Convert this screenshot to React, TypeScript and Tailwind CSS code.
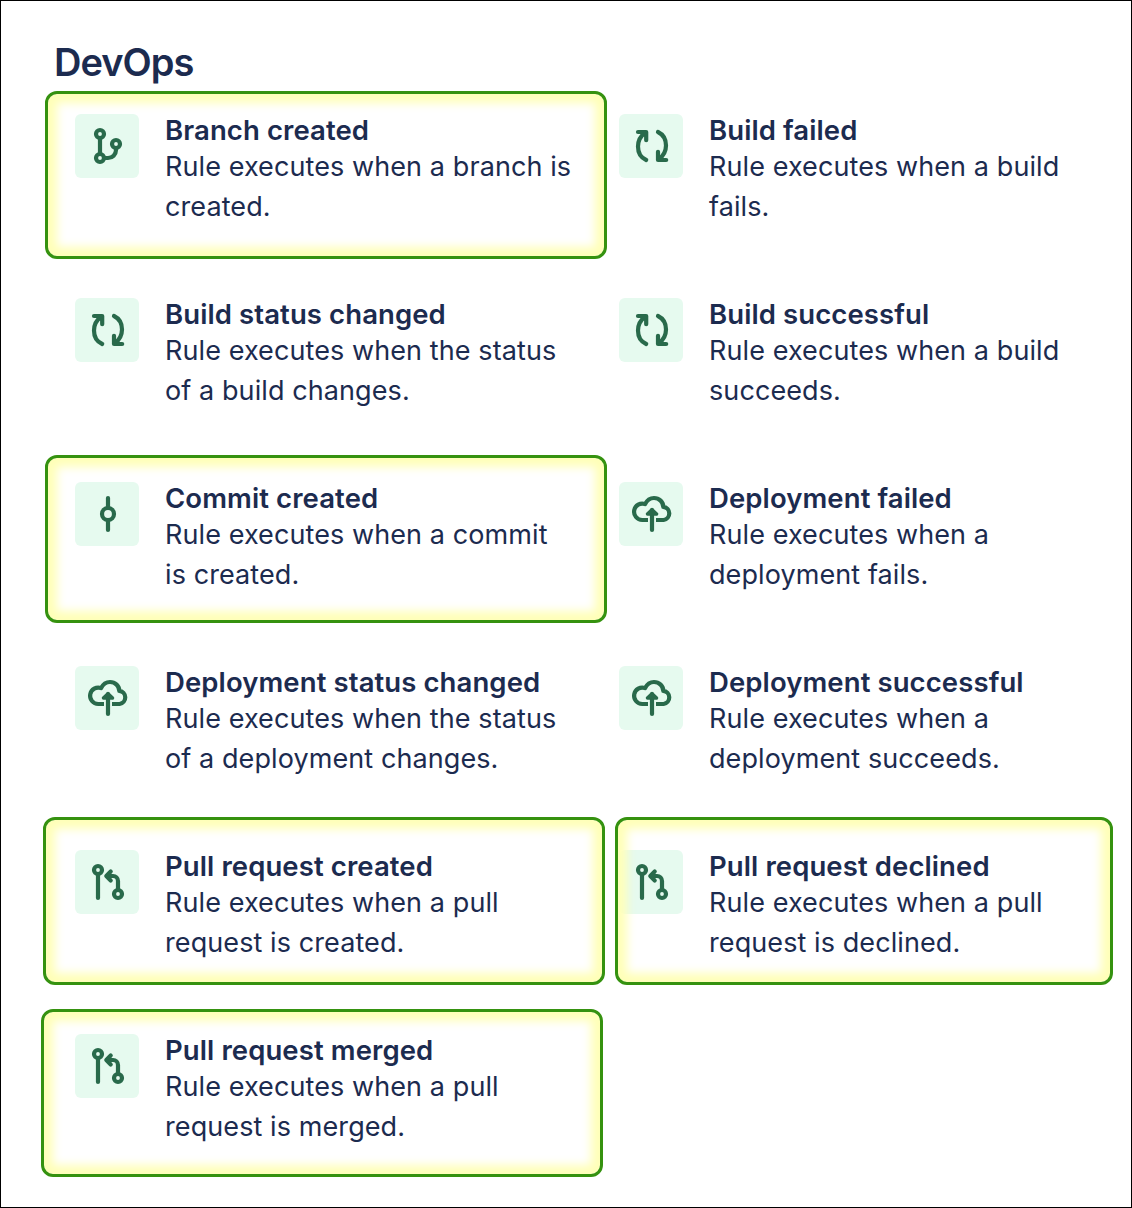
import type { ReactNode } from "react";

function BranchIcon() {
  return (
    <>
      <circle cx="25" cy="20" r="4" />
      <circle cx="25" cy="44" r="4" />
      <circle cx="41" cy="30" r="4" />
      <path d="M25 24v16M29 44h4a8 8 0 0 0 8-8v-2" />
    </>
  );
}

function BuildIcon() {
  return (
    <>
      <path d="M19 18h8.200v8.200M27.200 46C21.500 43.500 19 38 19 32.500C19 27 21.500 22 26.500 18.500" />
      <path d="M39 18C44.500 20.700 47 26 47 31.500C47 37 44.500 42 39.500 45.500M39 37.800v8.200h8.200" />
    </>
  );
}

function CommitIcon() {
  return (
    <>
      <circle cx="33" cy="32" r="6" />
      <path d="M33 16v10M33 38v10" />
    </>
  );
}

function DeployIcon() {
  return (
    <>
      <path
        strokeLinecap="butt"
        d="M29 38h-5.800a8.200 8.200 0 1 1 2.900-15.900C28 18.300 31 16 35 16c5.200 0 9.300 4 9.300 8.900A6.600 6.600 0 0 1 44.600 38H37"
      />
      <path d="M33 28v20" />
      <path fill="currentColor" strokeWidth="3.500" d="M33 27.700l4.500 4.300h-9z" />
    </>
  );
}

function PullIcon() {
  return (
    <>
      <circle cx="23" cy="20" r="4" />
      <circle cx="43" cy="44" r="4" />
      <path d="M23 24v24M43 40v-9a5 5 0 0 0-5-5h-6M35.700 21.600L31.300 26l4.400 4.400" />
    </>
  );
}

type Item = {
  title: string;
  lines: [string, string];
  icon: ReactNode;
  ring?: string;
};

const ITEMS: Item[] = [
  { title: "Branch created", lines: ["Rule executes when a branch is", "created."], icon: <BranchIcon />, ring: "-left-[30px] -top-[23px] w-[562px]" },
  { title: "Build failed", lines: ["Rule executes when a build", "fails."], icon: <BuildIcon /> },
  { title: "Build status changed", lines: ["Rule executes when the status", "of a build changes."], icon: <BuildIcon /> },
  { title: "Build successful", lines: ["Rule executes when a build", "succeeds."], icon: <BuildIcon /> },
  { title: "Commit created", lines: ["Rule executes when a commit", "is created."], icon: <CommitIcon />, ring: "-left-[30px] -top-[27px] w-[562px]" },
  { title: "Deployment failed", lines: ["Rule executes when a", "deployment fails."], icon: <DeployIcon /> },
  { title: "Deployment status changed", lines: ["Rule executes when the status", "of a deployment changes."], icon: <DeployIcon /> },
  { title: "Deployment successful", lines: ["Rule executes when a", "deployment succeeds."], icon: <DeployIcon /> },
  { title: "Pull request created", lines: ["Rule executes when a pull", "request is created."], icon: <PullIcon />, ring: "-left-[32px] -top-[33px] w-[562px]" },
  { title: "Pull request declined", lines: ["Rule executes when a pull", "request is declined."], icon: <PullIcon />, ring: "-left-[4px] -top-[33px] w-[498px]" },
  { title: "Pull request merged", lines: ["Rule executes when a pull", "request is merged."], icon: <PullIcon />, ring: "-left-[34px] -top-[25px] w-[562px]" },
];

function Trigger({ item }: { item: Item }) {
  return (
    <article className="relative flex h-[184px] items-start gap-[26px]">
      <div className="size-16 shrink-0 rounded-md bg-[#e6faef] text-[#296a4b]">
        <svg viewBox="0 0 64 64" className="size-16" fill="none" stroke="currentColor" strokeWidth="4.200" strokeLinecap="round" strokeLinejoin="round">
          {item.icon}
        </svg>
      </div>
      <div className="whitespace-nowrap pt-px text-[27px]">
        <h2 className="h-8 text-[27.5px] font-semibold leading-[30px] tracking-[0.1px]">{item.title}</h2>
        <p className="leading-10 tracking-[0.09px]">
          {item.lines[0]}
          <br />
          {item.lines[1]}
        </p>
      </div>
      {item.ring && (
        <div className={`pointer-events-none absolute h-[168px] rounded-xl border-3 border-[#35920f] shadow-[inset_0_0_10px_9px_#ffffb8] ${item.ring}`} />
      )}
    </article>
  );
}

export default function App() {
  return (
    <main className="h-[1208px] w-[1132px] overflow-hidden border border-black bg-white pl-[53px] pt-[38px] font-['Inter',sans-serif] text-[#1c2b4f]">
      <h1 className="h-[75px] text-[38px] font-semibold leading-[46px] tracking-[-1px]">DevOps</h1>
      <section className="ml-[21px] grid grid-cols-[544px_492px]">
        {ITEMS.map((item) => (
          <Trigger key={item.title} item={item} />
        ))}
      </section>
    </main>
  );
}
